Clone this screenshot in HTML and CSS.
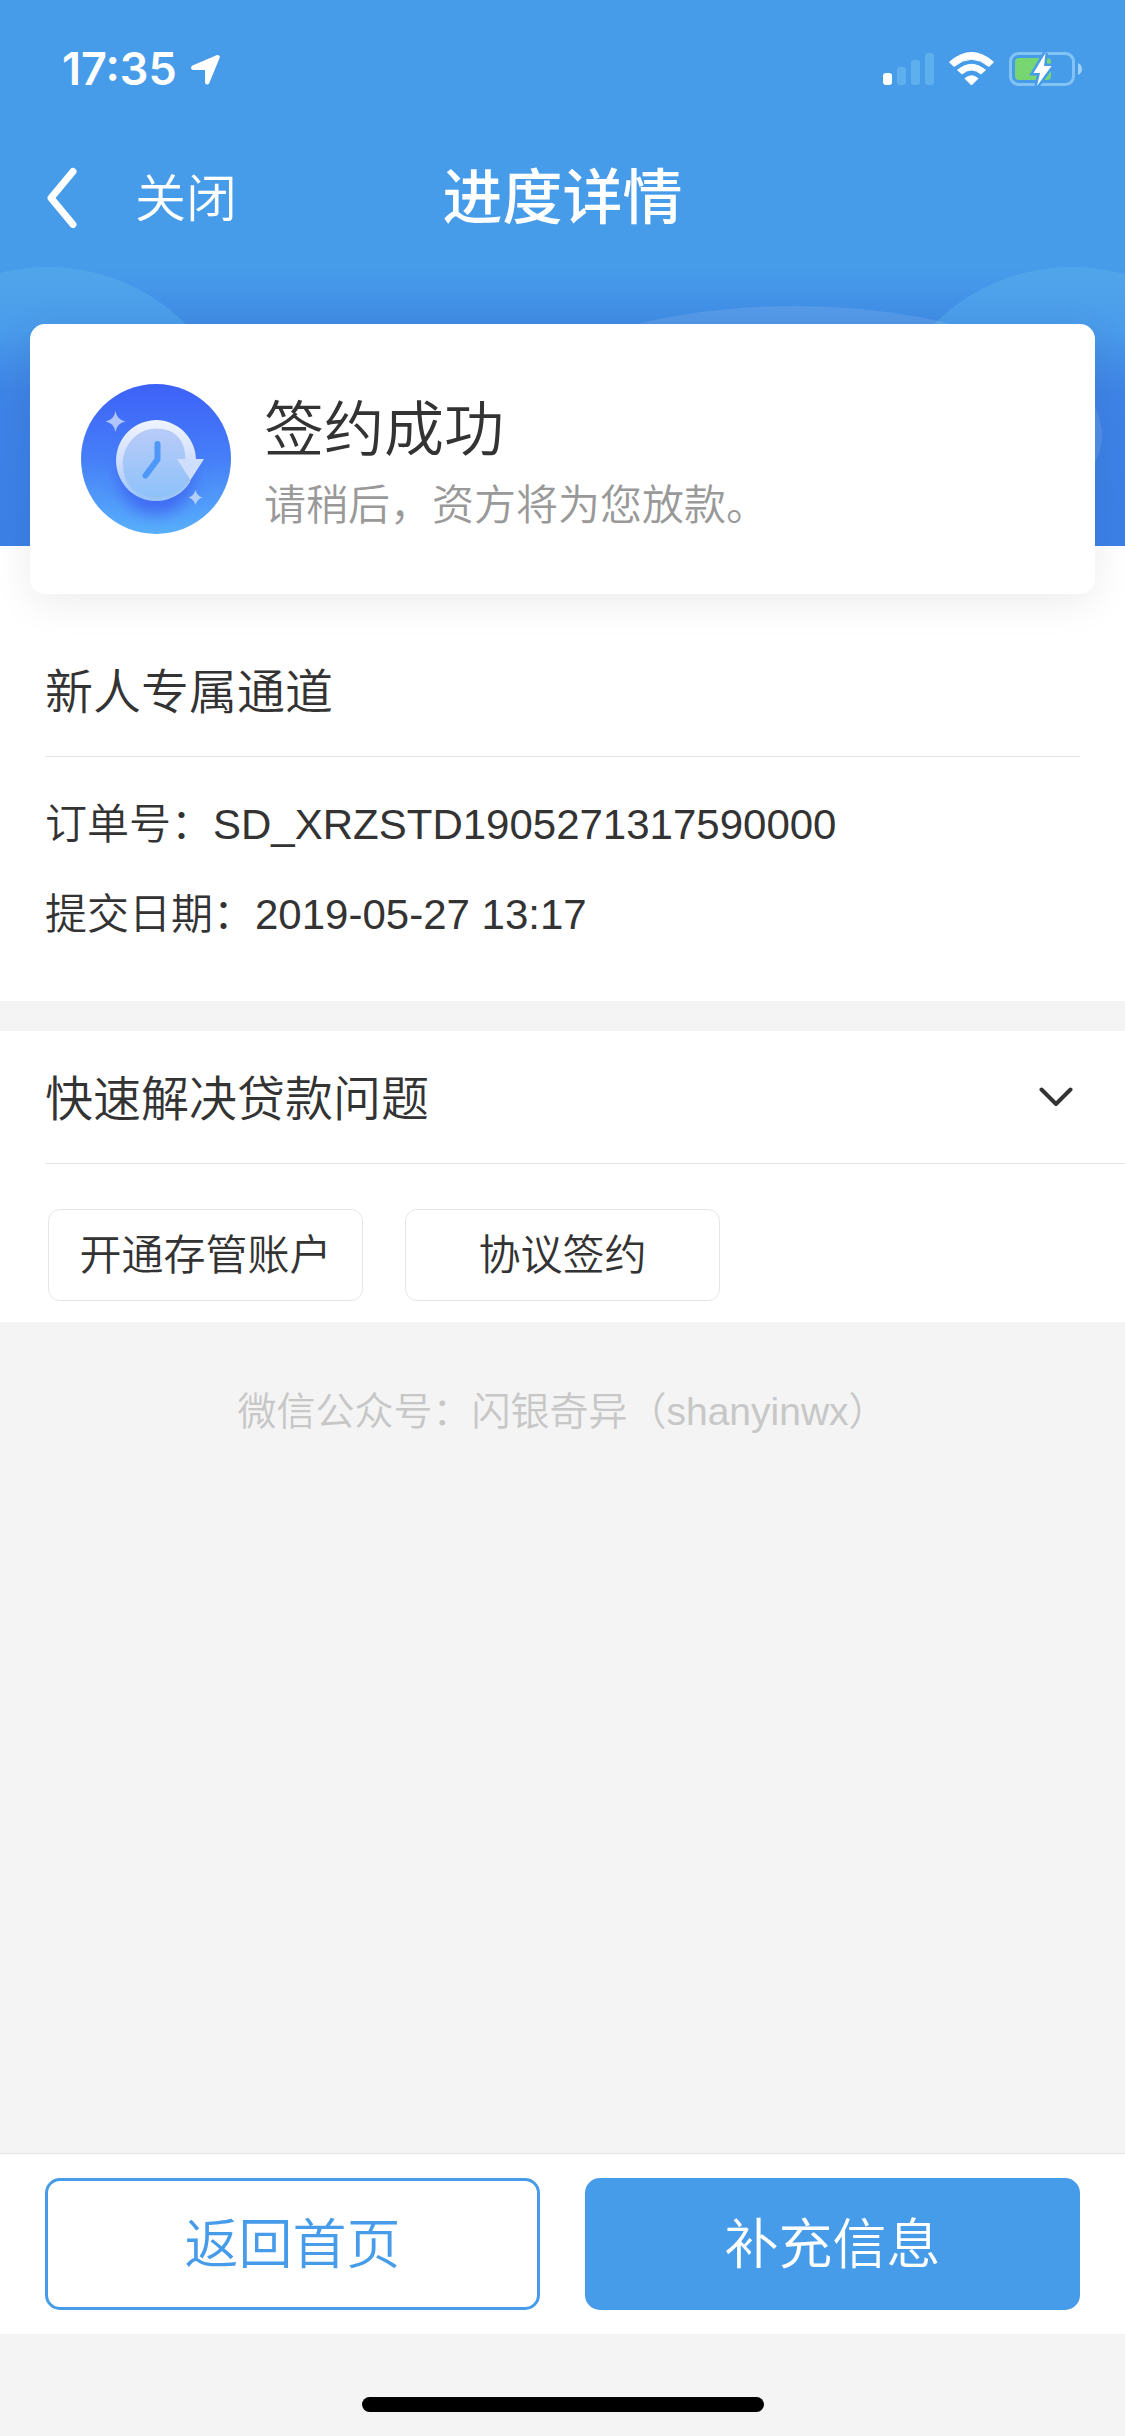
FILE: index.html
```html
<!DOCTYPE html>
<html lang="zh-CN">
<head>
  <meta charset="utf-8">
  <meta name="viewport" content="width=device-width, initial-scale=1">
  <title>进度详情</title>
  <link rel="stylesheet" href="styles.css">
</head>
<body>
  <header class="top">
    <div class="status-bar">
      <div class="status-time">
        <span>17:35</span>
        <svg width="29" height="31" viewBox="0 0 29 31" aria-hidden="true"><path d="M28 1.500Q29.300 2 28.600 4L18.300 29Q17.300 31 15.600 30.500Q14 30 14 28V16H2Q0 15.700 0 13.700Q0 12.500 1.500 11.600L25.500 1.200Q27 .6 28 1.500Z" fill="#fff"/></svg>
      </div>
      <div class="status-icons">
        <svg width="52" height="34" viewBox="0 0 52 34" aria-hidden="true">
          <rect x="0" y="21" width="9" height="12" rx="3" fill="#fff"/>
          <g fill="#5eafee"><rect x="14" y="15" width="9" height="18" rx="3"/><rect x="28" y="8" width="9" height="25" rx="3"/><rect x="42" y="1" width="9" height="32" rx="3"/></g>
        </svg>
        <svg width="46" height="34" viewBox="0 0 46 34" aria-hidden="true">
          <g fill="#fff" stroke="#fff" stroke-width="1" stroke-linejoin="round">
            <path d="M.5 10Q22.500-9 44.500 10L40 14.500Q22.500 0 5 14.500Z"/>
            <path d="M8.500 18Q22.500 6.500 36.500 18L32 22Q22.500 14 13 22Z"/>
            <path d="M16 26.500Q22.500 21 29 26.500L22.500 33Z"/>
          </g>
        </svg>
        <svg width="74" height="34" viewBox="0 0 74 34" aria-hidden="true">
          <rect x="1.500" y="1.500" width="63" height="31" rx="8" fill="none" stroke="#82c3f3" stroke-width="3"/>
          <path d="M69 11Q73 13 73 17Q73 21 69 23Z" fill="#a0d0f5"/>
          <rect x="6" y="6" width="36" height="22" rx="4" fill="#77d572"/>
          <path d="M36.500 1L24.500 21H31L28 34L42.500 14H35Z" fill="#fff" stroke="#479cea" stroke-width="5" paint-order="stroke"/>
        </svg>
      </div>
    </div>
    <nav class="nav-bar">
      <div class="nav-left">
        <button class="nav-back" type="button" aria-label="返回">
          <svg width="30" height="62" viewBox="0 0 30 62" aria-hidden="true"><path d="M26 4.500L4 31L26 57.500" fill="none" stroke="#fff" stroke-width="7" stroke-linecap="round" stroke-linejoin="round"/></svg>
        </button>
        <button class="nav-close" type="button">关闭</button>
      </div>
      <h1 class="nav-title">进度详情</h1>
    </nav>
  </header>

  <main class="content">
    <section class="hero">
      <svg class="hero-art" viewBox="0 0 1125 282" preserveAspectRatio="none" aria-hidden="true">
        <defs>
          <linearGradient id="sky" x1="0" y1="0" x2="0" y2="1"><stop offset="0" stop-color="#479dea"/><stop offset=".24" stop-color="#3f8ae6"/><stop offset=".5" stop-color="#3e83e7"/><stop offset="1" stop-color="#3c80e7"/></linearGradient>
          <linearGradient id="bubble" gradientUnits="userSpaceOnUse" x1="0" y1="3" x2="0" y2="130"><stop offset="0" stop-color="#56acea" stop-opacity=".6"/><stop offset=".5" stop-color="#4ea3ee" stop-opacity=".7"/><stop offset="1" stop-color="#4b96ec" stop-opacity="0"/></linearGradient>
        </defs>
        <rect width="1125" height="282" fill="url(#sky)"/>
        <circle cx="48" cy="198" r="195" fill="url(#bubble)"/>
        <circle cx="1072" cy="198" r="195" fill="url(#bubble)"/>
        <ellipse cx="794" cy="171" rx="308" ry="129" fill="#fff" fill-opacity=".1"/>
      </svg>
      <div class="status-card">
        <svg class="status-badge" width="150" height="150" viewBox="0 0 150 150" aria-hidden="true">
          <defs>
            <linearGradient id="disc" x1="0" y1="0" x2="0" y2="1"><stop offset="0" stop-color="#3d61f8"/><stop offset=".5" stop-color="#467ff8"/><stop offset="1" stop-color="#58b0fb"/></linearGradient>
            <linearGradient id="face" x1="0" y1="0" x2="0" y2="1"><stop offset="0" stop-color="#b9cbf8"/><stop offset="1" stop-color="#8dc2fa"/></linearGradient>
            <linearGradient id="ring" x1="0" y1="0" x2="0" y2="1"><stop offset="0" stop-color="#f0f4ff"/><stop offset=".55" stop-color="#cddcfc"/><stop offset="1" stop-color="#94c4fa"/></linearGradient>
            <filter id="soft" x="-50%" y="-50%" width="200%" height="200%"><feGaussianBlur stdDeviation="8"/></filter>
            <clipPath id="disc-clip"><circle cx="75" cy="75" r="75"/></clipPath>
          </defs>
          <circle cx="75" cy="75" r="75" fill="url(#disc)"/>
          <g clip-path="url(#disc-clip)"><circle cx="75" cy="92" r="38" fill="#4169f3" filter="url(#soft)"/></g>
          <path d="M115 75A40 40.500 0 1 0 109 98Z" fill="url(#ring)"/>
          <path d="M104 75Q103 45 75 45A33 35 0 0 0 42 79Q43 113 75 114Q97 114 109 96Z" fill="url(#face)" stroke="#aabff1" stroke-opacity=".6"/>
          <path d="M76.500 60V75.500L64.500 91.500" fill="none" stroke="#4f98f7" stroke-width="6" stroke-linecap="round" stroke-linejoin="round"/>
          <path d="M96 75H123L109.500 96Z" fill="#cedefc"/>
          <path d="M34.500 27Q36 36 44.500 37.500Q36 39 34.500 48Q33 39 24.500 37.500Q33 36 34.500 27Z" fill="#b1c4fb"/>
          <path d="M114.500 106Q116 112 121.500 113.500Q116 115 114.500 121Q113 115 107.500 113.500Q113 112 114.500 106Z" fill="#b4cdfb"/>
        </svg>
        <div class="status-text">
          <h2 class="status-title">签约成功</h2>
          <p class="status-note">请稍后，资方将为您放款。</p>
        </div>
      </div>
    </section>

    <section class="order">
      <h2 class="section-title order-title">新人专属通道</h2>
      <dl class="order-list">
        <div class="order-row"><dt>订单号：</dt><dd>SD_XRZSTD1905271317590000</dd></div>
        <div class="order-row"><dt>提交日期：</dt><dd>2019-05-27 13:17</dd></div>
      </dl>
    </section>

    <section class="help">
      <h2 class="help-heading">
        <button class="section-title help-toggle" type="button" aria-expanded="true">
          <span class="help-label">快速解决贷款问题</span>
          <svg width="34" height="20" viewBox="0 0 34 20" aria-hidden="true"><path d="M2.500 2.500L17 17L31.500 2.500" fill="none" stroke="#333" stroke-width="4" stroke-linecap="round" stroke-linejoin="round"/></svg>
        </button>
      </h2>
      <div class="help-tags">
        <button class="tag" type="button">开通存管账户</button>
        <button class="tag" type="button">协议签约</button>
      </div>
    </section>

    <p class="wechat">微信公众号：闪银奇异（shanyinwx）</p>
  </main>

  <footer class="bottom">
    <div class="actions">
      <button class="action action-outline" type="button">返回首页</button>
      <button class="action action-solid" type="button">补充信息</button>
    </div>
    <div class="home-area"><div class="home-indicator"></div></div>
  </footer>
</body>
</html>
```
FILE: styles.css
```css
:root {
  --blue: #479cea;
  --ink: #333;
  --line: #e5e5e5;
  --page: #f4f4f4;
  --gutter: 45px;
}

*,
*::before,
*::after {
  box-sizing: border-box;
}

body {
  display: flex;
  flex-direction: column;
  min-height: 100vh;
  margin: 0;
  background: var(--page);
  color: var(--ink);
  font-family: "Liberation Sans", "Noto Sans CJK SC", sans-serif;
  font-size: 42px;
  font-weight: 350;
  line-height: 60px;
}

h1,
h2,
p,
dl,
dd {
  margin: 0;
  font-weight: inherit;
}

button {
  margin: 0;
  padding: 0;
  border: 0;
  background: none;
  color: inherit;
  font: inherit;
  cursor: pointer;
}

svg {
  display: block;
  flex: none;
}

/* Header */
.top {
  background: var(--blue);
  color: #fff;
}

.status-bar {
  display: flex;
  align-items: center;
  justify-content: space-between;
  height: 132px;
  padding: 6px 42px 0 62px;
}

.status-time,
.status-icons {
  display: flex;
  align-items: center;
  gap: 14px;
}

.status-time {
  font-family: Inter, sans-serif;
  font-size: 45px;
  font-weight: 600;
}

.nav-bar {
  display: grid;
  grid-template-columns: 1fr auto 1fr;
  align-items: center;
  height: 132px;
}

.nav-left {
  display: flex;
  align-items: center;
  gap: 58px;
  padding-left: 47px;
}

.nav-close {
  padding-top: 4px;
  font-size: 51px;
}

.nav-title {
  padding-bottom: 10px;
  font-family: "Noto Sans CJK SC", sans-serif;
  font-size: 60px;
  font-weight: 500;
}

/* Status card over the blue artwork */
.hero {
  position: relative;
  padding: 60px 30px 0;
  background: #fff;
}

.hero-art {
  position: absolute;
  top: 0;
  left: 0;
  width: 100%;
  height: 282px;
}

.status-card {
  position: relative;
  display: flex;
  align-items: center;
  gap: 33px;
  min-height: 270px;
  padding: 51px;
  border-radius: 15px;
  background: #fff;
  box-shadow: 0 8px 40px rgba(0, 0, 0, 0.08);
}

.status-text {
  padding-top: 10px;
}

.status-title {
  font-size: 60px;
  line-height: 84px;
}

.status-note {
  color: #999;
  line-height: 66px;
}

/* Order details */
.order {
  padding: 48px var(--gutter) 56px;
  background: #fff;
}

.section-title {
  font-size: 48px;
}

.order-title {
  padding: 21px 0 33px;
  border-bottom: 1px solid var(--line);
}

.order-list {
  display: grid;
  gap: 30px;
  padding-top: 38px;
}

.order-row {
  display: flex;
}

/* Help */
.help {
  margin-top: 30px;
  background: #fff;
}

.help-heading {
  margin-left: var(--gutter);
  border-bottom: 1px solid var(--line);
}

.help-toggle {
  display: flex;
  align-items: center;
  justify-content: space-between;
  width: 100%;
  height: 132px;
  padding-right: 52px;
}

.help-label {
  padding-top: 6px;
}

.help-tags {
  display: flex;
  flex-wrap: wrap;
  gap: 42px;
  padding: 45px 48px 21px;
}

.tag {
  width: 315px;
  height: 92px;
  padding-top: 2px;
  border: 1px solid var(--line);
  border-radius: 12px;
}

.wechat {
  padding: 60px 30px;
  color: #c7c7c7;
  font-size: 39px;
  text-align: center;
}

/* Bottom actions */
.bottom {
  margin-top: auto;
}

.actions {
  display: grid;
  grid-template-columns: 1fr 1fr;
  gap: var(--gutter);
  padding: 24px var(--gutter);
  border-top: 1px solid var(--line);
  background: #fff;
}

.action {
  height: 132px;
  padding-top: 2px;
  border: 3px solid var(--blue);
  border-radius: 15px;
  font-size: 54px;
}

.action-outline {
  color: var(--blue);
}

.action-solid {
  background: var(--blue);
  color: #fff;
}

.home-area {
  display: flex;
  justify-content: center;
  padding: 63px 0 24px;
}

.home-indicator {
  width: 402px;
  height: 15px;
  border-radius: 8px;
  background: #000;
}
```
